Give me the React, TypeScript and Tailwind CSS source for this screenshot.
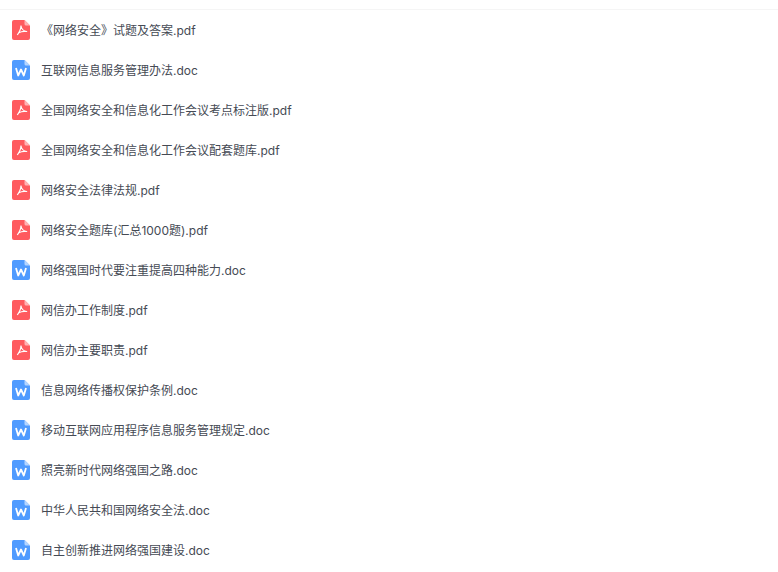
const files = [
  '《网络安全》试题及答案.pdf',
  '互联网信息服务管理办法.doc',
  '全国网络安全和信息化工作会议考点标注版.pdf',
  '全国网络安全和信息化工作会议配套题库.pdf',
  '网络安全法律法规.pdf',
  '网络安全题库(汇总1000题).pdf',
  '网络强国时代要注重提高四种能力.doc',
  '网信办工作制度.pdf',
  '网信办主要职责.pdf',
  '信息网络传播权保护条例.doc',
  '移动互联网应用程序信息服务管理规定.doc',
  '照亮新时代网络强国之路.doc',
  '中华人民共和国网络安全法.doc',
  '自主创新推进网络强国建设.doc',
];

function FileIcon({ type }: { type: 'pdf' | 'doc' }) {
  const isPdf = type === 'pdf';
  return (
    <svg width="18" height="20" viewBox="0 0 18 20" className="shrink-0">
      <path d="M2 0H12.5L18 5.5V18a2 2 0 0 1-2 2H2a2 2 0 0 1-2-2V2a2 2 0 0 1 2-2Z" fill={isPdf ? '#ff5a5f' : '#4f9bff'} />
      <path d="M12.5 0L18 5.5H14a1.5 1.5 0 0 1-1.5-1.5Z" fill={isPdf ? '#ffb3b5' : '#b5d5ff'} />
      {isPdf ? (
        <path
          d="M9 5.5C9 8.5 7.5 12 5.3 15M9 6C9.5 9 11.5 11 14.7 11.5C12 11 9 11.5 6.8 12.8"
          fill="none"
          stroke="#fff"
          strokeWidth="1.2"
          strokeLinejoin="round"
        />
      ) : (
        <path d="M4 8L6.2 15.5L9 9.5L11.8 15.5L14 8" fill="none" stroke="#fff" strokeWidth="1.8" strokeLinejoin="round" />
      )}
    </svg>
  );
}

export default function App() {
  return (
    <div className="w-[778px] h-[572px] overflow-hidden bg-white font-['Inter','Noto_Sans_CJK_SC',sans-serif]">
      <div className="mt-[9px] border-t border-[#f5f5f5]">
        {files.map((name) => (
          <div key={name} className="flex h-10 items-center gap-[11px] pl-3">
            <FileIcon type={name.endsWith('.pdf') ? 'pdf' : 'doc'} />
            <span className="pt-0.5 text-xs leading-5 text-[#454a54]">{name}</span>
          </div>
        ))}
      </div>
    </div>
  );
}
